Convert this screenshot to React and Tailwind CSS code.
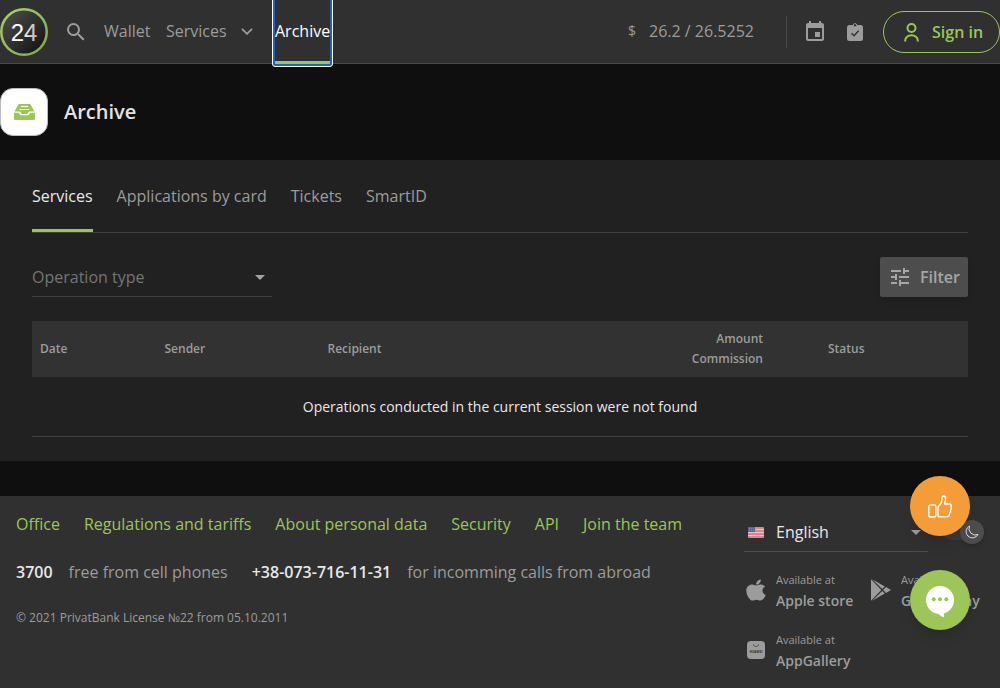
import React from "react";
import { MdSearch, MdEvent, MdTune, MdArrowDropDown } from "react-icons/md";
import { FaApple } from "react-icons/fa";

const tabs = ["Services", "Applications by card", "Tickets", "SmartID"];
const links = ["Office", "Regulations and tariffs", "About personal data", "Security", "API", "Join the team"];

function Logo() {
  return (
    <svg className="block size-12" viewBox="0 0 48 48">
      <defs>
        <linearGradient id="ring" x1="0" y1="0" x2="1" y2="1">
          <stop offset="0" stopColor="#a8d468" />
          <stop offset="1" stopColor="#7fa848" />
        </linearGradient>
        <linearGradient id="disc" x1="0" y1="0" x2="1" y2="1">
          <stop offset="0.1" stopColor="#4a4a4a" />
          <stop offset="0.9" stopColor="#151515" />
        </linearGradient>
        <linearGradient id="digits" x1="0" y1="0" x2="1" y2="0">
          <stop offset="0.4" stopColor="#fff" />
          <stop offset="1" stopColor="#b5b5b5" />
        </linearGradient>
      </defs>
      <circle cx="24" cy="24" r="22.7" fill="url(#disc)" stroke="url(#ring)" strokeWidth="2.5" />
      <text x="24" y="32.5" textAnchor="middle" fontFamily="Liberation Sans" fontSize="24" fill="url(#digits)">24</text>
    </svg>
  );
}

function TrayIcon() {
  return (
    <svg className="h-4 w-[21px]" viewBox="0 0 21 16">
      <path d="M5.500 0h10a1.500 1.500 0 0 1 1.300.8l3.600 6.700h-4.800a1 1 0 0 0-.9.500l-1.200 2h-6L6.300 8a1 1 0 0 0-.9-.5H.600L4.200.8A1.500 1.500 0 0 1 5.500 0z" fill="#9cc657" />
      <path d="M0 8.700h5l1.200 2a1 1 0 0 0 .9.500h6.800a1 1 0 0 0 .9-.5l1.200-2h5v6a1.300 1.300 0 0 1-1.300 1.300H1.300A1.300 1.300 0 0 1 0 14.700z" fill="#9cc657" />
      <path d="M7 2.500h7M5.500 5.500h10" stroke="#fff" strokeWidth="1.100" />
    </svg>
  );
}

function TaskIcon() {
  return (
    <svg className="h-[18px] w-4" viewBox="0 0 16 18">
      <path d="M2.500 2h11A2.500 2.500 0 0 1 16 4.500v11a2.500 2.500 0 0 1-2.500 2.500h-11A2.500 2.500 0 0 1 0 15.500v-11A2.500 2.500 0 0 1 2.500 2z" fill="#9c9c9c" />
      <circle cx="8" cy="2.300" r="1.700" fill="#303030" stroke="#9c9c9c" />
      <path d="M4.500 10.300l2.500 2.500 4.700-5" fill="none" stroke="#303030" strokeWidth="1.400" />
    </svg>
  );
}

function UserIcon() {
  return (
    <svg className="h-[19px] w-[15px]" viewBox="0 0 15 19" fill="none" stroke="#9cc657" strokeWidth="2">
      <circle cx="7.500" cy="5" r="4" />
      <path d="M1.200 18.500v-1a6.300 5.300 0 0 1 12.600 0v1" />
    </svg>
  );
}

function Flag() {
  return (
    <svg className="h-[11px] w-4" viewBox="0 0 16 11">
      <rect width="16" height="11" rx="1" fill="#d9858a" />
      <path d="M0 2.500h16M0 5.500h16M0 8.500h16" stroke="#dcc8ca" strokeWidth="1" />
      <rect width="7" height="5" fill="#60629a" />
      <path d="M1 1.500h5M1 3.500h5" stroke="#9091b8" strokeWidth=".7" strokeDasharray="1 1" />
    </svg>
  );
}

function PlayIcon() {
  return (
    <svg className="h-[22px] w-5" viewBox="0 0 20 22" fill="#9c9c9c">
      <path d="M0 .3v21.400L10.300 11z" />
      <path d="M1.200.2l10 9.800 2.600-2.500z" />
      <path d="M1.200 21.800l10-9.800 2.600 2.500z" />
      <path d="M15 8.100L12.100 11l2.900 2.900L20 11z" />
    </svg>
  );
}

function GalleryIcon() {
  return (
    <svg className="size-[18px]" viewBox="0 0 18 18">
      <rect width="18" height="18" rx="4" fill="#9c9c9c" />
      <path d="M6.300 3.200a2.700 2.400 0 0 0 5.400 0" fill="none" stroke="#555" strokeWidth=".9" />
      <text x="9" y="11.700" textAnchor="middle" fontFamily="Open Sans" fontWeight="700" fontSize="3.200" fill="#303030">HUAWEI</text>
    </svg>
  );
}

function Store({ icon, name }) {
  return (
    <div className="flex h-[60px]">
      <div className="flex h-[34px] w-8 shrink-0 items-center pt-px">{icon}</div>
      <div className="flex flex-col whitespace-nowrap">
        <span className="text-[11px] leading-4">Available at</span>
        <span className="mt-px text-sm font-semibold leading-6">{name}</span>
      </div>
    </div>
  );
}

export default function App() {
  return (
    <div className="relative flex h-[688px] w-[1000px] flex-col overflow-hidden bg-[#0f0f0f] font-['Open_Sans',sans-serif] text-base text-[#9c9c9c]">
      <header className="flex h-16 shrink-0 items-center border-b border-[#4a4a4a] bg-[#303030]">
        <Logo />
        <MdSearch className="ml-4 size-6" />
        <nav className="flex h-16 items-center">
          <span className="mb-px ml-4 w-[62px]">Wallet</span>
          <span className="mb-px w-[74px]">Services</span>
          <svg className="ml-px mb-px h-[7px] w-3" viewBox="0 0 12 7" fill="none" stroke="#9c9c9c" strokeWidth="1.800"><path d="M1 .8l5 5 5-5" /></svg>
          <div className="relative ml-[22px] mt-px flex h-16 w-[55px] items-center border-b-[3px] border-[#9cc657] text-white outline-2 outline-[#1f5fc9]">
            Archive
            <span className="absolute -inset-x-[3px] -bottom-[6px] top-[-4px] rounded-[3px] border border-white" />
          </div>
        </nav>
        <div className="ml-auto flex items-center">
          <span className="mb-px w-[21px] text-sm">$</span>
          <span className="mb-px w-[137px]">26.2 / 26.5252</span>
          <span className="h-8 w-px bg-[#4a4a4a]" />
          <MdEvent className="ml-4 mt-px size-6" />
          <span className="ml-5"><TaskIcon /></span>
          <button className="ml-5 flex h-[42px] w-[117px] items-center rounded-full border border-[#9cc657] pl-[20px] font-semibold text-[#9cc657]">
            <span className="mt-px"><UserIcon /></span>
            <span className="ml-[13px]">Sign in</span>
          </button>
        </div>
      </header>

      <div className="flex h-24 shrink-0 items-center gap-4">
        <div className="flex size-12 items-center justify-center rounded-[13px] border border-[#bdbdbd] bg-white"><TrayIcon /></div>
        <h1 className="text-xl font-semibold text-[#e3e3e3]">Archive</h1>
      </div>

      <main className="h-[301px] shrink-0 bg-[#212121] px-8">
        <div className="flex h-[73px] gap-6 border-b border-[#404040]">
          {tabs.map((t, i) => (
            <div key={t} className={i === 0 ? "h-[72px] border-b-[3px] border-[#9cc657] pt-6 text-[#e8e8e8]" : "pt-6"}>{t}</div>
          ))}
        </div>
        <div className="flex justify-between pt-6">
          <div className="flex h-10 w-60 items-center justify-between border-b border-[#424242] text-[#757575]">
            <span>Operation type</span>
            <MdArrowDropDown className="size-6 text-[#a3a3a3]" />
          </div>
          <button className="flex h-10 w-[88px] items-center rounded-[2px] bg-[#4d4d4d] pl-2 font-semibold text-[#a6a6a6] shadow-md">
            <MdTune className="size-6" />
            <span className="ml-2">Filter</span>
          </button>
        </div>
        <div className="mt-6 flex h-14 items-center bg-[#323232] pl-2 text-xs font-semibold leading-5">
          <span className="w-[124.500px]">Date</span>
          <span className="w-[163px]">Sender</span>
          <span className="w-[250px]">Recipient</span>
          <span className="w-[185.500px] text-right">Amount<br />Commission</span>
          <span className="ml-[65px]">Status</span>
        </div>
        <div className="flex h-[60px] items-center justify-center border-b border-[#424242] text-sm text-[#e8e8e8]">
          Operations conducted in the current session were not found
        </div>
      </main>

      <footer className="mt-[35px] flex h-48 shrink-0 bg-[#303030]">
        <div className="flex w-[744px] flex-col pl-4 pt-4">
          <div className="flex gap-6 text-[#9cc657]">{links.map((l) => <a key={l}>{l}</a>)}</div>
          <div className="mt-6 flex">
            <b className="font-semibold text-[#e8e8e8]">3700</b>
            <span className="ml-4">free from cell phones</span>
            <b className="ml-6 font-semibold text-[#e8e8e8]">+38-073-716-11-31</b>
            <span className="ml-4">for incomming calls from abroad</span>
          </div>
          <p className="mt-6 text-xs leading-5">© 2021 PrivatBank License №22 from 05.10.2011</p>
        </div>
        <div className="flex flex-col pt-4">
          <div className="flex items-center">
            <div className="flex h-10 w-[184px] items-center border-b border-[#4c4c4c] pl-1 text-[#e8e8e8]">
              <span className="pt-px"><Flag /></span>
              <span className="ml-3">English</span>
              <MdArrowDropDown className="ml-auto size-6 text-[#9c9c9c]" />
            </div>
            <div className="ml-4 flex h-4 w-10 items-center justify-end rounded-full bg-[#3b3b3b]">
              <div className="flex size-6 shrink-0 items-center justify-center rounded-full bg-[#4d4d4d] shadow-md">
                <svg className="size-3.5" viewBox="0 0 14 14" fill="none" stroke="#ddd" strokeLinejoin="round"><path d="M4.500 1A6.300 6.300 0 1 0 13 9.500 6.500 6.500 0 0 1 4.500 1z" /></svg>
              </div>
            </div>
          </div>
          <div className="flex pt-5">
            <div className="w-[125px]">
              <Store icon={<FaApple className="ml-px h-6 w-[22px] scale-x-110" />} name="Apple store" />
              <Store icon={<span className="pl-[3px]"><GalleryIcon /></span>} name="AppGallery" />
            </div>
            <Store icon={<span className="pl-0.5"><PlayIcon /></span>} name="Google Play" />
          </div>
        </div>
      </footer>

      <div className="absolute left-[910px] top-[476px] flex size-[60px] items-center justify-center rounded-full bg-[#f39c38] shadow-lg">
        <svg className="h-[23px] w-6" viewBox="0 0 24 23" fill="none" stroke="#fff" strokeWidth="1.400" strokeLinejoin="round"><rect x=".8" y="10" width="7" height="12" rx="1.500" /><path d="M10.500 11.200c2.400-1.900 3.800-4 3.400-8.200-.1-2.600 3.400-2.700 3.700.4.200 2-.5 3.900-1 5.600h4.800c1.800 0 2.200 1.600 1.600 2.900.6 1.400.3 2.500-.5 3.200.4 1.300 0 2.300-.8 3 0 2.200-1 3.800-3.200 3.800h-7c-1 0-1.500-.7-1.500-1.500v-7.700z" /></svg>
      </div>
      <div className="absolute left-[910px] top-[570px] flex size-[60px] items-center justify-center rounded-full bg-[#9cc657] shadow-lg">
        <svg className="mt-0.5 h-[31px] w-7" viewBox="0 0 28 31" fill="#fff"><path d="M14 0a14 14 0 0 0-14 14c0 8 6 13.500 12.500 14 1.300 1.500 3 3 5.500 3v-3.600C24 25.500 28 21 28 14A14 14 0 0 0 14 0z" /><g fill="#9cc657"><circle cx="7.700" cy="13.300" r="2" /><circle cx="14" cy="13.300" r="2" /><circle cx="20.300" cy="13.300" r="2" /></g></svg>
      </div>
    </div>
  );
}
